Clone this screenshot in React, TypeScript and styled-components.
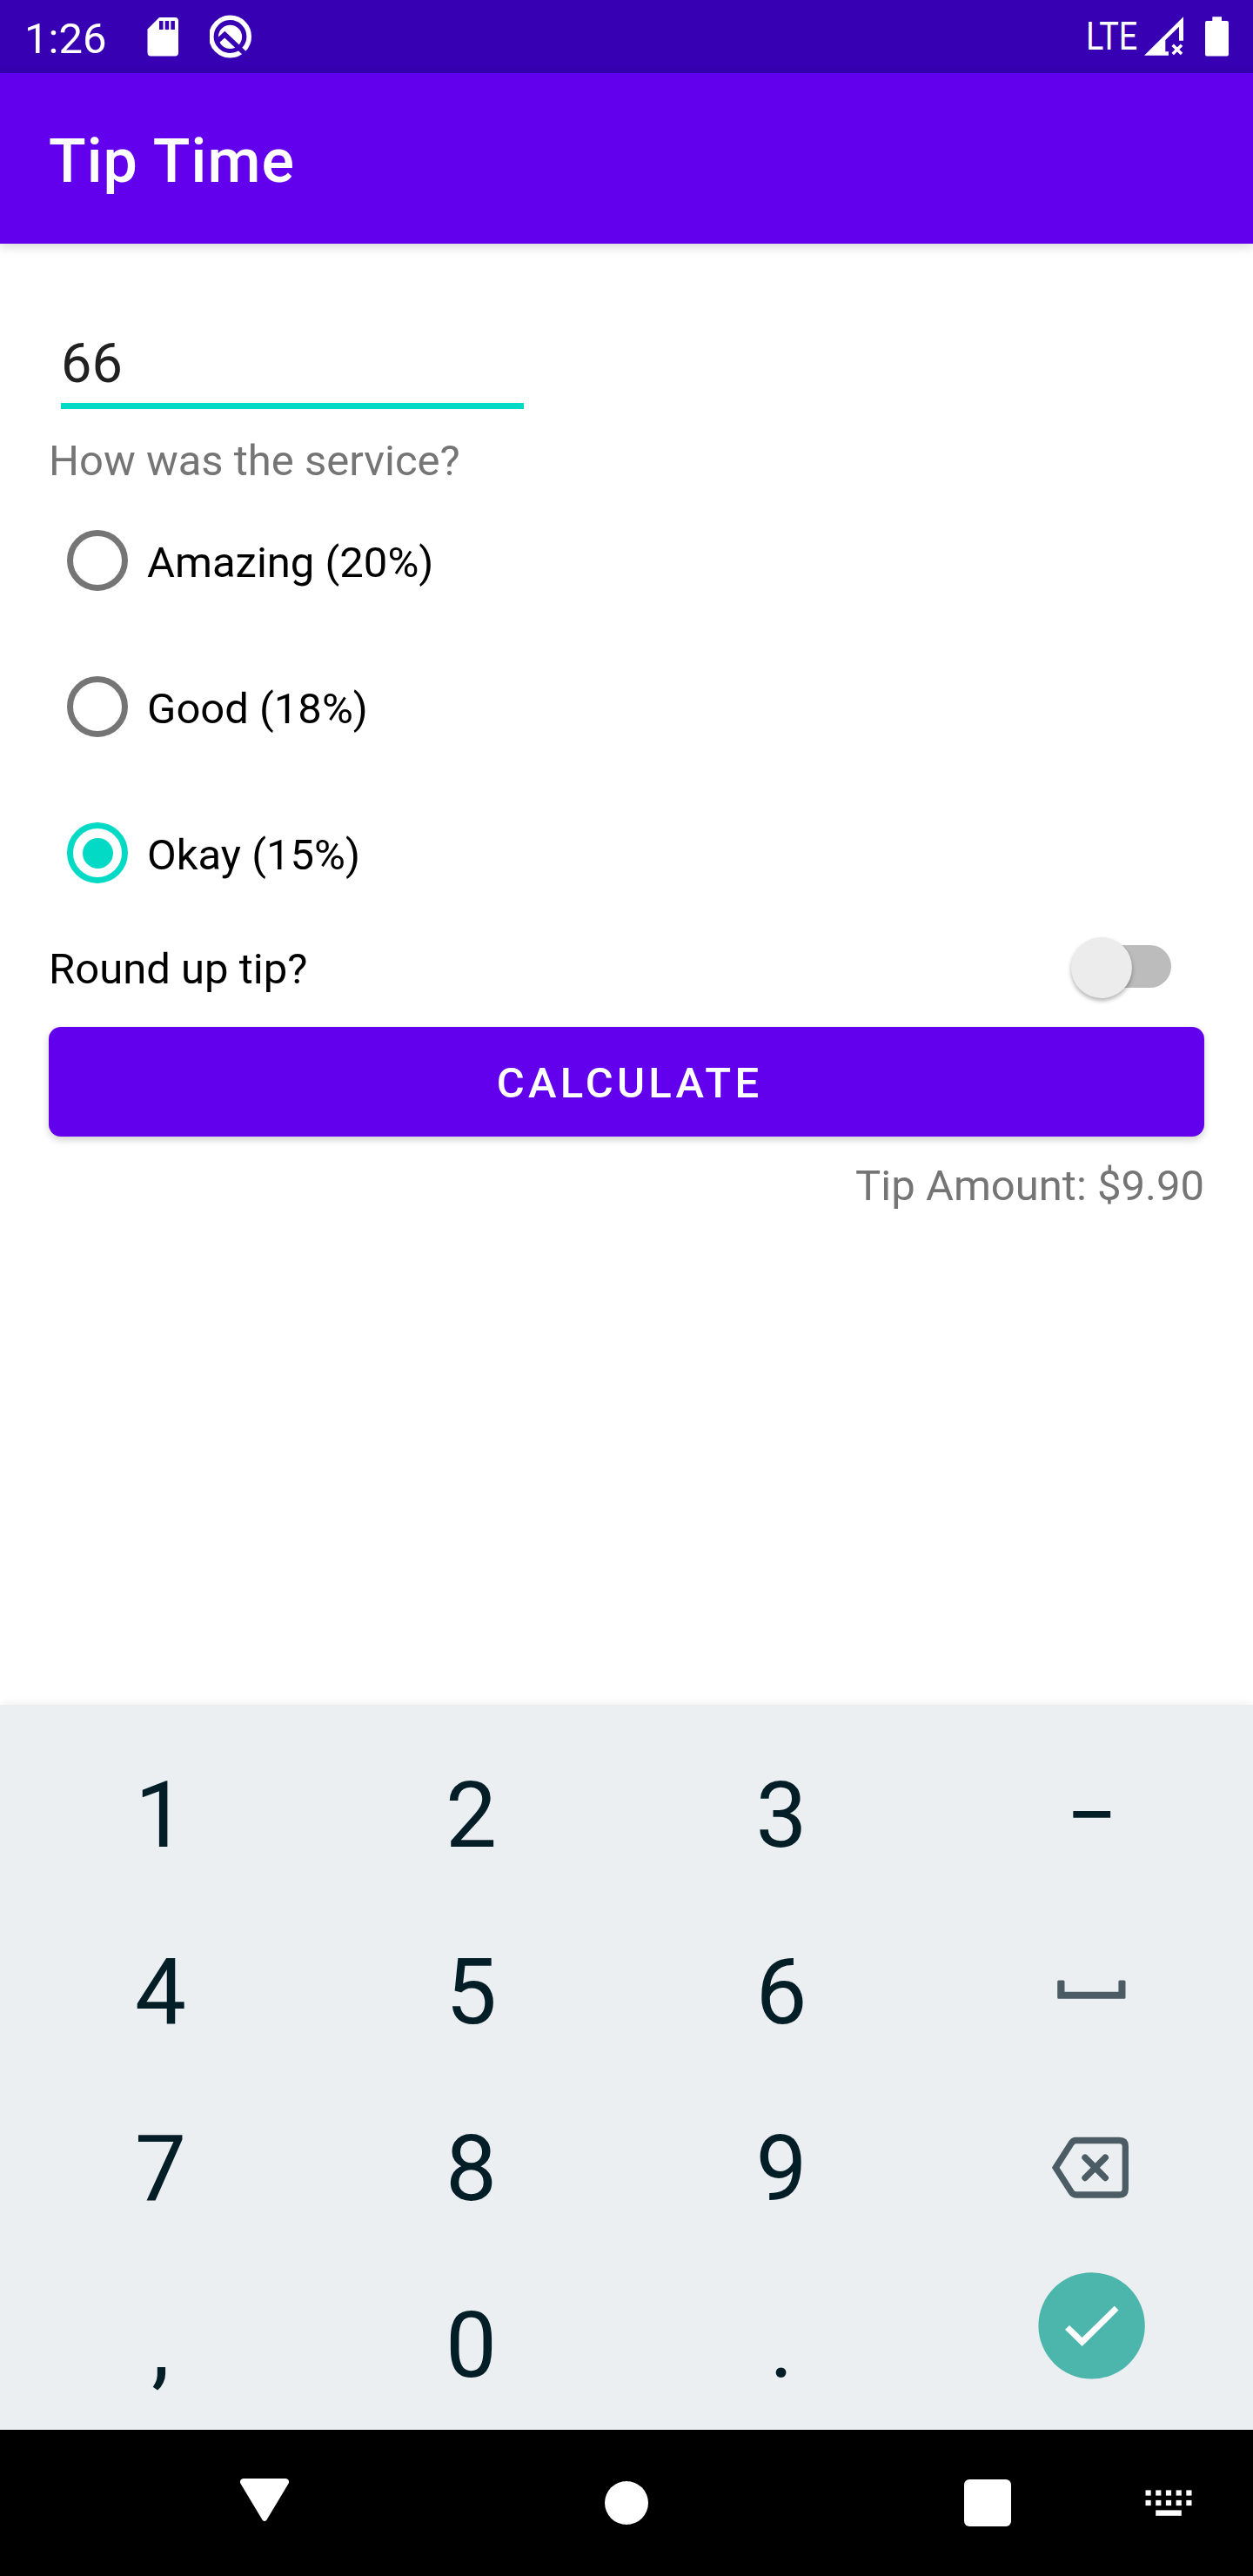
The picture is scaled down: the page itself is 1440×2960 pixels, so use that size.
import React, { useState } from "react";
import styled, { createGlobalStyle } from "styled-components";

const GlobalStyle = createGlobalStyle`
  * { box-sizing: border-box; }
  body { margin: 0; background: #fff; }
  svg { display: block; flex: none; }
`;

const Screen = styled.div`
  display: flex;
  flex-direction: column;
  width: 1440px;
  height: 2960px;
  background: #fff;
  font-family: Roboto, "Noto Sans", sans-serif;
  overflow: hidden;
`;

const StatusBar = styled.header`
  display: flex;
  justify-content: space-between;
  height: 84px;
  background: #3700b3;
  color: #fff;
`;

const StatusGroup = styled.div`
  display: flex;
  align-items: flex-start;
`;

const Clock = styled.span`
  width: 169px;
  padding: 16px 0 0 28px;
  font-size: 49px;
  line-height: 57px;
`;

const Network = styled.span`
  width: 66px;
  padding-top: 17px;
  font-size: 43.5px;
  line-height: 51px;
  transform: scaleX(0.868);
  transform-origin: 0 0;
`;

const AppBar = styled.div`
  display: flex;
  align-items: center;
  height: 196px;
  padding: 6px 56px 0;
  background: #6200ee;
  color: #fff;
  box-shadow: 0 3px 12px rgba(0, 0, 0, 0.17);
`;

const Title = styled.h1`
  margin: 0;
  font-size: 70px;
  font-weight: 500;
  line-height: 82px;
  letter-spacing: 1.05px;
`;

const Form = styled.main`
  display: flex;
  flex-direction: column;
  flex: 1;
  padding: 101px 56px 0;
`;

const CostField = styled.div`
  width: 532px;
  margin-left: 14px;
  padding-bottom: 9px;
  border-bottom: 7px solid #03dac5;
  color: #212121;
  font-size: 63px;
  line-height: 73px;
`;

const Caption = styled.p<{ $end?: boolean }>`
  margin: ${(p) => (p.$end ? "28px 0 0" : "31px 0 2px")};
  color: #757575;
  font-size: 49px;
  line-height: 57px;
  text-align: ${(p) => (p.$end ? "right" : "left")};
`;

const Option = styled.div`
  display: flex;
  align-items: center;
  gap: 22px;
  height: 168px;
  padding-left: 21px;
`;

const Radio = styled.span<{ $on: boolean }>`
  display: grid;
  place-items: center;
  width: 70px;
  height: 70px;
  border: 7px solid ${(p) => (p.$on ? "#03dac5" : "#757575")};
  border-radius: 50%;

  &::after {
    content: "";
    width: 35px;
    height: 35px;
    border-radius: 50%;
    background: ${(p) => (p.$on ? "#03dac5" : "transparent")};
  }
`;

const Label = styled.span<{ $drop: number }>`
  margin-top: ${(p) => p.$drop}px;
  color: #000;
  font-size: 49px;
  line-height: 57px;
`;

const SwitchRow = styled.div`
  display: flex;
  align-items: center;
  justify-content: space-between;
  height: 84px;
  margin: 6px 0 26px;
  padding-right: 38px;
`;

const Switch = styled.span`
  display: flex;
  align-items: center;
  width: 108px;
  height: 49px;
  margin-bottom: 3px;
  border-radius: 25px;
  background: #bcbcbc;
`;

const Thumb = styled.span`
  flex: none;
  width: 70px;
  height: 70px;
  margin: 3px 0 0 -7px;
  border-radius: 50%;
  background: #ececec;
  box-shadow: 0 3px 5px rgba(0, 0, 0, 0.3);
`;

const Calculate = styled.button`
  height: 126px;
  padding: 3px 0 0 7px;
  border: 0;
  border-radius: 14px;
  background: #6200ee;
  color: #fff;
  font: 500 49px/57px Roboto, sans-serif;
  letter-spacing: 4.25px;
  box-shadow: 0 4px 8px rgba(0, 0, 0, 0.18);
`;

const Keyboard = styled.section`
  display: grid;
  grid-template-columns: 357px 357px 356px 357px;
  grid-auto-rows: 193px;
  row-gap: 10px;
  height: 833px;
  padding: 31px 7px 0 6px;
  background: #ebeff2;
  box-shadow: 0 0 10px rgba(0, 0, 0, 0.09);
`;

const Key = styled.div<{ $top?: number }>`
  display: flex;
  justify-content: center;
  padding-top: ${(p) => p.$top ?? 0}px;
  color: #041e27;
  font-size: 105px;
  line-height: 193px;
`;

const NavBar = styled.nav`
  display: flex;
  align-items: flex-start;
  height: 168px;
  padding: 56px 70px 0 276px;
  background: #000;
`;

const NavHome = styled.span`
  width: 50px;
  height: 50px;
  margin: 3px 363px 0;
  border-radius: 50%;
  background: #fff;
`;

const NavRecents = styled.span`
  width: 54px;
  height: 54px;
  margin: 1px 153px 0 0;
  border-radius: 6px;
  background: #fff;
`;

const SdCard = () => (
  <svg width="72" height="84" viewBox="169 0 72 84" fill="#fff">
    <path
      fillRule="evenodd"
      d="M183 20H201Q205 20 205 24V60.500Q205 64.500 201 64.500H173.500Q169.500 64.500 169.500 60.500V33.500ZM183 24V34H187.500V24ZM189.700 24V34H194.200V24ZM196.400 24V34H200.900V24Z"
    />
  </svg>
);

const Debugger = () => (
  <svg width="50" height="84" viewBox="241 0 50 84">
    <circle cx="264.500" cy="42" r="21.700" fill="none" stroke="#fff" strokeWidth="5.600" />
    <circle cx="264.500" cy="42.300" r="13.600" fill="#fff" />
    <path d="M249 48L258.300 39.600L284.500 64.500" fill="none" stroke="#3700b3" strokeWidth="5.600" />
  </svg>
);

const Signal = () => (
  <svg width="68" height="84" viewBox="1314 0 68 84">
    <path
      d="M1315 63.700L1360 19.300V46.700H1355V30.700L1339.300 46V59.300H1343V63.700Z"
      fill="#fff"
    />
    <path d="M1347.700 51.700L1358 62M1358 51.700L1347.700 62" stroke="#fff" strokeWidth="3.500" />
  </svg>
);

const Battery = () => (
  <svg width="58" height="84" viewBox="1382 0 58 84" fill="#fff">
    <path d="M1393.300 19.300H1404V24H1410Q1412 24 1412 26V62.500Q1412 64.500 1410 64.500H1387Q1385 64.500 1385 62.500V26Q1385 24 1387 24H1393.300Z" />
  </svg>
);

const SpaceIcon = () => (
  <svg width="81" height="24" viewBox="1214 2275 81 24">
    <path
      d="M1216.700 2275.500H1222Q1223.500 2275.500 1223.500 2277V2288.800H1285.400V2277Q1285.400 2275.500 1286.900 2275.500H1292Q1293.500 2275.500 1293.500 2277V2295.200Q1293.500 2296.700 1292 2296.700H1216.700Q1215.200 2296.700 1215.200 2295.200V2277Q1215.200 2275.500 1216.700 2275.500Z"
      fill="#4c5c65"
    />
  </svg>
);

const Backspace = () => (
  <svg width="93" height="72" viewBox="1208 2455 93 72" fill="none" stroke="#4c5c65">
    <path
      d="M1213.200 2490.700L1230.800 2463.200Q1233.200 2459.500 1236.500 2459.500H1286.500Q1293.300 2459.500 1293.300 2466.300V2515.200Q1293.300 2522 1286.500 2522H1236.500Q1233.200 2522 1230.800 2518.300Z"
      strokeWidth="7.300"
    />
    <path
      d="M1247 2479.200L1270.300 2502.500M1270.300 2479.200L1247 2502.500"
      strokeWidth="7.400"
      strokeLinecap="round"
    />
  </svg>
);

const Done = () => (
  <svg width="123" height="123" viewBox="1193 2611 123 123">
    <circle cx="1254.600" cy="2672.400" r="61.200" fill="#4db6ac" />
    <path
      d="M1224 2676.700L1229 2672L1243.700 2686L1280.700 2649.700L1285.500 2654.500L1243.700 2696Z"
      fill="#fff"
    />
  </svg>
);

const Back = () => (
  <svg width="56" height="50" viewBox="276 2848 56 50" fill="#fff">
    <path d="M279.500 2848H328.500Q331 2848 332 2850.500V2853L306.500 2895.500Q304 2898.500 301.500 2895.500L276 2853V2850.500Q277 2848 279.500 2848Z" />
  </svg>
);

const dotColumns = [0, 1, 2, 3, 4];

const SwitchKeyboard = () => (
  <svg width="55" height="50" viewBox="1315 2848 55 50" fill="#fff">
    {dotColumns.map((c) => (
      <React.Fragment key={c}>
        <rect x={1316.5 + c * 11.7} y="2861.400" width="6.200" height="6.200" />
        <rect x={1316.5 + c * 11.7} y="2872.900" width="6.200" height="6.200" />
      </React.Fragment>
    ))}
    <rect x="1328.200" y="2884.400" width="29.600" height="6.400" />
  </svg>
);

const options = ["Amazing (20%)", "Good (18%)", "Okay (15%)"];

export default function App() {
  const [service, setService] = useState(2);

  return (
    <>
      <GlobalStyle />
      <Screen>
        <StatusBar>
          <StatusGroup>
            <Clock>1:26</Clock>
            <SdCard />
            <Debugger />
          </StatusGroup>
          <StatusGroup>
            <Network>LTE</Network>
            <Signal />
            <Battery />
          </StatusGroup>
        </StatusBar>
        <AppBar>
          <Title>Tip Time</Title>
        </AppBar>
        <Form>
          <CostField>66</CostField>
          <Caption>How was the service?</Caption>
          {options.map((text, i) => (
            <Option key={text} onClick={() => setService(i)}>
              <Radio $on={service === i} />
              <Label $drop={5}>{text}</Label>
            </Option>
          ))}
          <SwitchRow>
            <Label $drop={3}>Round up tip?</Label>
            <Switch>
              <Thumb />
            </Switch>
          </SwitchRow>
          <Calculate>CALCULATE</Calculate>
          <Caption $end>Tip Amount: $9.90</Caption>
        </Form>
        <Keyboard>
          <Key>1</Key>
          <Key>2</Key>
          <Key>3</Key>
          <Key>−</Key>
          <Key>4</Key>
          <Key>5</Key>
          <Key>6</Key>
          <Key $top={82}>
            <SpaceIcon />
          </Key>
          <Key>7</Key>
          <Key>8</Key>
          <Key>9</Key>
          <Key $top={59}>
            <Backspace />
          </Key>
          <Key>,</Key>
          <Key>0</Key>
          <Key>.</Key>
          <Key $top={12}>
            <Done />
          </Key>
        </Keyboard>
        <NavBar>
          <Back />
          <NavHome />
          <NavRecents />
          <SwitchKeyboard />
        </NavBar>
      </Screen>
    </>
  );
}
